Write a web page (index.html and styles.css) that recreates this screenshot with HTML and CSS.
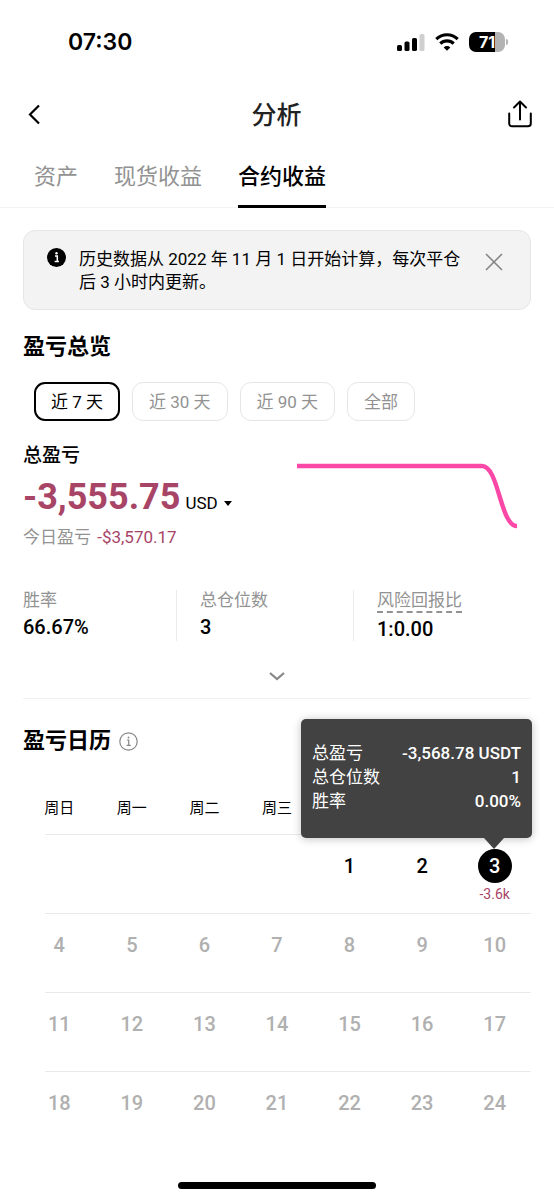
FILE: index.html
```html
<!DOCTYPE html>
<html lang="zh-CN">
<head>
<meta charset="utf-8">
<meta name="viewport" content="width=device-width, initial-scale=1">
<title>分析</title>
<link rel="stylesheet" href="styles.css">
</head>
<body>
<div class="screen">
  <div class="status">
    <time class="clock">07:30</time>
    <div class="indicators">
      <svg width="28" height="20" viewBox="0 0 28 20" aria-hidden="true">
        <rect x="0" y="13" width="5" height="6" rx="1.6"/>
        <rect x="7.5" y="9.500" width="5" height="9.500" rx="1.600"/>
        <rect x="15" y="6" width="5" height="13" rx="1.6"/>
        <rect x="22.500" y="2" width="5" height="17" rx="1.600" fill="#cfcfcf"/>
      </svg>
      <svg width="24" height="20" viewBox="0 0 24 20" fill="none" stroke="#000" stroke-width="3.100" aria-hidden="true">
        <path d="M1.300 7.200a15.200 15.200 0 0 1 21.400 0"/>
        <path d="M5.300 11.600a9.500 9.500 0 0 1 13.400 0"/>
        <path d="M8.700 15.400a4.700 4.700 0 0 1 6.600 0L12 18.800z" fill="#000" stroke="none"/>
      </svg>
      <div class="battery"><span>71</span></div>
    </div>
  </div>

  <header class="nav">
    <button class="icon-btn" type="button" aria-label="返回">
      <svg width="22" height="28" viewBox="0 0 22 28" fill="none" stroke="#000" stroke-width="2.200"><path d="M16 5.500 7 14.500l9 9"/></svg>
    </button>
    <h1>分析</h1>
    <button class="icon-btn" type="button" aria-label="分享">
      <svg width="24" height="28" viewBox="0 0 24 28" fill="none" stroke="#000" stroke-width="2" stroke-linecap="round" stroke-linejoin="round"><path d="M1.200 13.500v10a2.800 2.800 0 0 0 2.800 2.800h16a2.800 2.800 0 0 0 2.800-2.800v-10M12 19.500V1.500M6 7.500l6-6 6 6"/></svg>
    </button>
  </header>

  <nav class="tabs">
    <a href="#assets">资产</a>
    <a href="#spot">现货收益</a>
    <a href="#futures" class="active" aria-current="page">合约收益</a>
  </nav>

  <main>
    <aside class="notice">
      <svg width="19" height="19" viewBox="0 0 19 19" aria-hidden="true"><circle cx="9.500" cy="9.500" r="9.500"/><path d="M8 8h2.300v5.500M7.600 13.500h4.300" fill="none" stroke="#fff" stroke-width="1.500"/><circle cx="9.500" cy="5.300" r="1.200" fill="#fff"/></svg>
      <p>历史数据从 2022 年 11 月 1 日开始计算，每次平仓后 3 小时内更新。</p>
      <button type="button" aria-label="关闭">
        <svg width="18" height="18" viewBox="0 0 18 18" fill="none" stroke="#858585" stroke-width="1.600"><path d="m1 1 16 16M17 1 1 17"/></svg>
      </button>
    </aside>

    <section class="overview">
      <h2>盈亏总览</h2>
      <div class="ranges">
        <button type="button" class="selected" aria-pressed="true">近 7 天</button>
        <button type="button" aria-pressed="false">近 30 天</button>
        <button type="button" aria-pressed="false">近 90 天</button>
        <button type="button" aria-pressed="false">全部</button>
      </div>
      <div class="summary">
        <div class="total">
          <h3>总盈亏</h3>
          <div class="amount">
            <strong>-3,555.75</strong>
            <button type="button" class="currency">USD
              <svg width="8" height="5" viewBox="0 0 8 5" aria-hidden="true"><path d="M0 0h8L4 5z"/></svg>
            </button>
          </div>
          <p class="today">今日盈亏 <span>-$3,570.17</span></p>
        </div>
        <svg class="trend" width="222" height="68" viewBox="0 0 222 68" fill="none" role="img" aria-label="盈亏走势"><path d="M0 3H185C202 3 203 63 220 63" stroke="#fb47a6" stroke-width="4.400"/></svg>
      </div>
      <dl class="stats">
        <div><dt>胜率</dt><dd>66.67%</dd></div>
        <div><dt>总仓位数</dt><dd>3</dd></div>
        <div><dt><span class="hint">风险回报比</span></dt><dd>1:0.00</dd></div>
      </dl>
      <button class="expand" type="button" aria-label="展开">
        <svg width="16" height="9" viewBox="0 0 16 9" fill="none" stroke="#888" stroke-width="2.300"><path d="m1 1 7 6 7-6"/></svg>
      </button>
    </section>

    <section class="calendar">
      <h2>盈亏日历
        <svg width="19" height="19" viewBox="0 0 19 19" fill="none" stroke="#888" stroke-width="1.200" aria-hidden="true"><circle cx="9.500" cy="9.500" r="8.700"/><path d="M8 8h1.700v5.300M7.600 13.300h4.200"/><circle cx="9.500" cy="5.500" r=".9" fill="#888" stroke="none"/></svg>
      </h2>
      <table>
        <thead>
          <tr><th>周日</th><th>周一</th><th>周二</th><th>周三</th><th>周四</th><th>周五</th><th>周六</th></tr>
        </thead>
        <tbody>
          <tr class="past"><td></td><td></td><td></td><td></td><td><span class="day">1</span></td><td><span class="day">2</span></td>
            <td class="current"><span class="day">3</span><span class="pnl">-3.6k</span>
              <dl class="tooltip" role="tooltip">
                <div><dt>总盈亏</dt><dd>-3,568.78 USDT</dd></div>
                <div><dt>总仓位数</dt><dd>1</dd></div>
                <div><dt>胜率</dt><dd>0.00%</dd></div>
              </dl>
            </td></tr>
          <tr><td><span class="day">4</span></td><td><span class="day">5</span></td><td><span class="day">6</span></td><td><span class="day">7</span></td><td><span class="day">8</span></td><td><span class="day">9</span></td><td><span class="day">10</span></td></tr>
          <tr><td><span class="day">11</span></td><td><span class="day">12</span></td><td><span class="day">13</span></td><td><span class="day">14</span></td><td><span class="day">15</span></td><td><span class="day">16</span></td><td><span class="day">17</span></td></tr>
          <tr><td><span class="day">18</span></td><td><span class="day">19</span></td><td><span class="day">20</span></td><td><span class="day">21</span></td><td><span class="day">22</span></td><td><span class="day">23</span></td><td><span class="day">24</span></td></tr>
        </tbody>
      </table>
    </section>
  </main>
  <div class="home-bar"></div>
</div>
</body>
</html>
```
FILE: styles.css
```css
* { box-sizing: border-box; margin: 0; padding: 0; }

body {
  background: #fff;
  color: #000;
  font: 400 17px/24px Roboto, "Noto Sans CJK SC", sans-serif;
}

button {
  border: 0;
  background: none;
  color: inherit;
  font: inherit;
  cursor: pointer;
}

a { color: inherit; text-decoration: none; }
svg { display: block; flex: none; }

.screen {
  display: flex;
  flex-direction: column;
  min-height: 100vh;
}

.status {
  display: flex;
  justify-content: space-between;
  align-items: center;
  height: 84px;
  padding: 0 46px 0 68px;
}

.clock { font: 600 23px/28px Inter, sans-serif; }

.indicators { display: flex; align-items: center; gap: 10px; }

.battery {
  position: relative;
  width: 36px;
  height: 20px;
  margin-right: 3px;
  border-radius: 7px;
  background: linear-gradient(90deg, #000 71%, #b3b3b3 71%);
  color: #fff;
  font: 700 16px/20px Inter, sans-serif;
  text-align: center;
}

.battery::after {
  content: "";
  position: absolute;
  top: 7px;
  right: -3px;
  width: 2px;
  height: 6px;
  border-radius: 0 2px 2px 0;
  background: #b3b3b3;
}

.nav {
  display: flex;
  justify-content: space-between;
  align-items: center;
  height: 60px;
  padding: 0 22px 0 23px;
}

.icon-btn { display: flex; }

h1 { padding-top: 3px; color: #222; font-size: 25px; font-weight: 500; line-height: 36px; }

.tabs {
  display: flex;
  gap: 36px;
  height: 64px;
  padding: 0 34px;
  border-bottom: 1px solid #f3f3f3;
  color: #929292;
  font-size: 22px;
  font-weight: 400;
  line-height: 65px;
}

.tabs .active {
  height: 64px;
  border-bottom: 3px solid #000;
  color: #000;
  font-weight: 500;
}

main { padding: 22px 23px 0; }

.notice {
  display: flex;
  align-items: flex-start;
  gap: 13px;
  padding: 17px 27px 15px 23px;
  border: 1px solid #e6e6e6;
  border-radius: 12px;
  background: #f3f3f3;
}

.notice p { flex: 1; min-height: 46px; line-height: 23px; }
.notice > button { margin: 5px 0 0 11px; }

h2 {
  display: flex;
  align-items: center;
  gap: 8px;
  font-size: 22px;
  font-weight: 700;
  line-height: 32px;
}

.overview { padding-top: 21px; border-bottom: 1px solid #f1f1f1; }

.ranges {
  display: flex;
  flex-wrap: wrap;
  gap: 12px;
  padding: 19px 11px 0;
}

.ranges button {
  height: 39px;
  padding: 0 16px;
  border: 1px solid #e6e6e6;
  border-radius: 11px;
  color: #929292;
}

.ranges .selected { padding: 0 15px; border: 2px solid #000; color: #000; }

.summary {
  display: flex;
  justify-content: space-between;
  align-items: flex-start;
  padding-top: 21px;
}

h3 { font-size: 19px; font-weight: 500; line-height: 28px; }

.amount { display: flex; align-items: baseline; gap: 5px; }
.amount strong { color: #a84466; font-size: 36px; font-weight: 700; line-height: 55px; }
.currency { display: flex; align-items: center; gap: 6px; font-size: 17px; }
.today { color: #929292; }
.today span { margin-left: 2px; color: #a84466; }
.trend { margin: 21px 12px 0 0; }

.stats {
  display: grid;
  grid-template-columns: repeat(3, 1fr);
  column-gap: 23px;
  padding-top: 41px;
}

.stats div { min-height: 48px; }
.stats div:not(:last-child) { border-right: 1px solid #ebebeb; }
.stats dt { color: #929292; line-height: 21px; }
.stats dd { padding-top: 4px; font-size: 20px; font-weight: 500; }
.hint { display: inline-block; border-bottom: 2px dashed #929292; }

.expand {
  display: flex;
  justify-content: center;
  align-items: center;
  width: 100%;
  height: 57px;
  padding-top: 13px;
}

.calendar { padding-top: 26px; }

table {
  width: 100%;
  margin-top: 28px;
  border-collapse: collapse;
  table-layout: fixed;
}

/* Row rules start at the left edge of the first column's label */
tr { background: linear-gradient(#e9e9e9, #e9e9e9) right bottom / calc(100% - 22px) 1px no-repeat; }
tbody tr:last-child { background: none; }
th { height: 50px; padding-bottom: 4px; font-size: 15px; font-weight: 400; }
td { height: 79px; padding-top: 14px; vertical-align: top; text-align: center; color: #b0b0b0; }
.past td { color: #000; }

.day {
  display: block;
  width: 34px;
  margin: 0 auto;
  font-size: 20px;
  font-weight: 500;
  line-height: 34px;
}

.current { position: relative; }
.current .day { border-radius: 50%; background: #000; color: #fff; }
.pnl { display: block; color: #a84466; font-size: 14px; line-height: 22px; }

.tooltip {
  position: absolute;
  right: -1px;
  bottom: 76px;
  width: 231px;
  padding: 22px 11px 25px;
  border-radius: 5px;
  background: #424242;
  box-shadow: 0 1px 9px rgba(0, 0, 0, .25);
  color: #fff;
}

.tooltip dd { font-weight: 500; }

.tooltip::after {
  content: "";
  position: absolute;
  top: 100%;
  right: 28px;
  border: solid transparent;
  border-width: 11px 10px 0;
  border-top-color: #424242;
}

.tooltip div { display: flex; justify-content: space-between; }

.home-bar {
  width: 198px;
  height: 7px;
  margin: auto auto 11px;
  border-radius: 4px;
  background: #000;
}
```
